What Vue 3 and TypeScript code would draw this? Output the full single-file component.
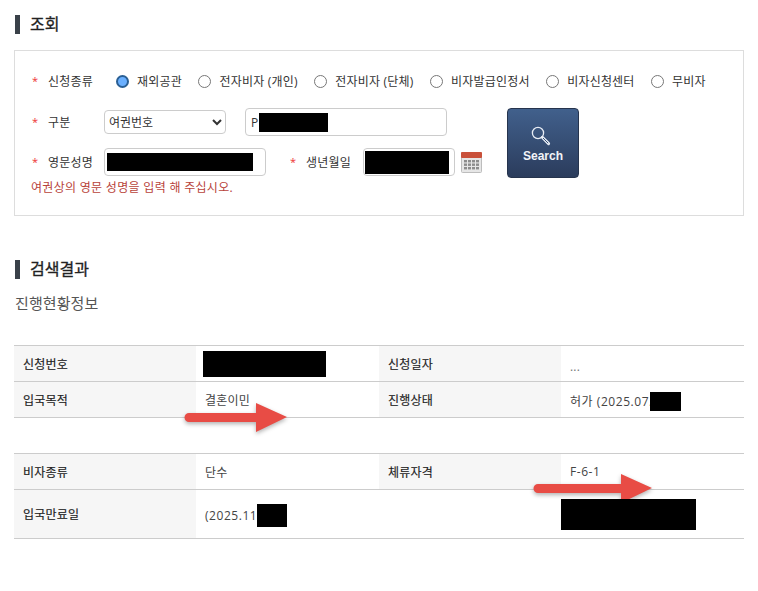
<script setup lang="ts">
const radios: string[] = ['재외공관', '전자비자 (개인)', '전자비자 (단체)', '비자발급인정서', '비자신청센터', '무비자']
</script>

<template>
  <div class="page">
    <h2 class="heading">조회</h2>
    <section class="box">
      <div class="row radio-row">
        <span class="star">*</span>
        <span class="label">신청종류</span>
        <div class="radios">
          <label v-for="(r, i) in radios" :key="r" class="radio">
            <input type="radio" name="kind" :checked="i === 0" />
            <span>{{ r }}</span>
          </label>
        </div>
      </div>
      <div class="form-body">
        <div class="fields">
          <div class="row">
            <span class="star">*</span>
            <span class="label">구분</span>
            <select class="select"><option>여권번호</option></select>
            <div class="input passport"><span>P</span><i class="mask m-pass"></i></div>
          </div>
          <div class="row">
            <span class="star">*</span>
            <span class="label">영문성명</span>
            <div class="input name"><i class="mask m-name"></i></div>
            <span class="star star2">*</span>
            <span class="label label2">생년월일</span>
            <div class="input birth"><i class="mask m-birth"></i></div>
            <svg class="cal" width="21" height="21" viewBox="0 0 21 21">
              <rect x="0.5" y="0.5" width="20" height="20" rx="1" fill="#e6e6e6" stroke="#bdbdbd" />
              <rect x="0" y="0" width="21" height="6" rx="1" fill="#c9503a" />
              <g fill="#8c8c8c">
                <rect x="3" y="8" width="3" height="2.4" /><rect x="7" y="8" width="3" height="2.4" /><rect x="11" y="8" width="3" height="2.4" /><rect x="15" y="8" width="3" height="2.4" />
                <rect x="3" y="11.5" width="3" height="2.4" /><rect x="7" y="11.5" width="3" height="2.4" /><rect x="11" y="11.5" width="3" height="2.4" /><rect x="15" y="11.5" width="3" height="2.4" />
                <rect x="3" y="15" width="3" height="2.4" /><rect x="7" y="15" width="3" height="2.4" /><rect x="11" y="15" width="3" height="2.4" /><rect x="15" y="15" width="3" height="2.4" />
              </g>
            </svg>
          </div>
          <p class="error">여권상의 영문 성명을 입력 해 주십시오.</p>
        </div>
        <button class="search" type="button">
          <svg class="lens" width="20" height="20" viewBox="0 0 20 20" fill="none" stroke="#e8edf5">
            <circle cx="7" cy="7" r="5.6" stroke-width="1.3" />
            <path d="M11.3 11.3 L17.6 17.6" stroke-width="3" stroke-linecap="round" />
            <path d="M12 12 L17.2 17.2" stroke="#3a5278" stroke-width="1" />
          </svg>
          <span>Search</span>
        </button>
      </div>
    </section>

    <h2 class="heading second">검색결과</h2>
    <h3 class="sub">진행현황정보</h3>

    <div class="results">
      <table class="tbl first">
        <tbody>
          <tr>
            <th>신청번호</th>
            <td class="c1"><i class="mask m-no"></i></td>
            <th>신청일자</th>
            <td class="dots">...</td>
          </tr>
          <tr>
            <th>입국목적</th>
            <td class="c1">결혼이민</td>
            <th>진행상태</th>
            <td class="low lat">허가 (2025.07.<i class="mask m-date"></i></td>
          </tr>
        </tbody>
      </table>
      <table class="tbl">
        <tbody>
          <tr>
            <th>비자종류</th>
            <td class="c1">단수</td>
            <th>체류자격</th>
            <td class="lat">F-6-1</td>
          </tr>
          <tr class="tall">
            <th>입국만료일</th>
            <td class="c1 low lat">(2025.11<i class="mask m-exp"></i></td>
            <th class="blank"></th>
            <td class="flush"><i class="mask m-big"></i></td>
          </tr>
        </tbody>
      </table>
      <svg class="arrow a1" width="104" height="31" viewBox="0 0 104 31">
        <path d="M5 11 H72 V1 L103 15 L72 30 V20 H5 A4.5 4.5 0 0 1 5 11 Z" fill="#e84c45" />
      </svg>
      <svg class="arrow a2" width="120" height="31" viewBox="0 0 120 31">
        <path d="M5 11 H88 V1 L119 15 L88 30 V20 H5 A4.5 4.5 0 0 1 5 11 Z" fill="#e84c45" />
      </svg>
    </div>
  </div>
</template>

<style scoped>
.page {
  width: 730px;
  padding: 15px 14px 0;
  font-family: "Open Sans", "Noto Sans CJK KR", sans-serif;
  font-size: 12px;
  color: #333;
}
.heading {
  margin: 0 0 16px 1px;
  height: 19px;
  padding-left: 10px;
  border-left: 5px solid #3a4149;
  font-size: 16px;
  font-weight: 400;
  -webkit-text-stroke: 0.3px #222;
  line-height: 18px;
  color: #222;
}
.heading.second { margin-top: 44px; margin-bottom: 0; }
.sub {
  margin: 14px 0 0 1px;
  font-size: 15px;
  font-weight: 400;
  line-height: 20px;
  color: #555;
  letter-spacing: 0.1px;
}
.box {
  box-sizing: border-box;
  height: 166px;
  border: 1px solid #ddd;
  padding: 20px 0 0 17px;
}
.row { display: flex; align-items: center; }
.radio-row { height: 20px; margin-bottom: 17px; }
.star { width: 16px; color: #e33; font-size: 11px; line-height: 12px; }
.label { width: 56px; letter-spacing: 0.2px; }
.radios { display: flex; gap: 16.5px; margin-left: 12px; }
.radio { display: flex; align-items: center; gap: 8px; letter-spacing: 0.2px; white-space: nowrap; }
.radio input {
  appearance: none;
  box-sizing: border-box;
  width: 13px;
  height: 13px;
  margin: 0;
  border: 1px solid #777;
  border-radius: 50%;
  background: #fff;
}
.radio input:checked {
  border: 2px solid #2a5f94;
  background: #6bb0ff;
}
.form-body { display: flex; align-items: flex-start; }
.fields { width: 475px; display: flex; flex-direction: column; gap: 12px; }
.select {
  box-sizing: border-box;
  width: 122px;
  height: 24px;
  border: 1px solid #ccc;
  border-radius: 4px;
  background: #fff;
  padding: 0;
  font: inherit;
  color: #333;
}
.input {
  box-sizing: border-box;
  position: relative;
  display: flex;
  align-items: center;
  height: 28px;
  border: 1px solid #ccc;
  border-radius: 4px;
  background: #fff;
}
.passport { width: 202px; margin-left: 19px; padding-left: 5px; }
.name { width: 162px; padding-left: 2px; }
.birth { width: 92px; padding-left: 1px; margin-left: 1px; }
.star2 { margin-left: 24px; }
.label2 { width: 56px; }
.cal { margin-left: 6px; }
.mask { display: inline-block; background: #000; }
.m-pass { width: 69px; height: 19px; margin-left: 1px; }
.m-name { width: 146px; height: 18px; }
.m-birth { width: 84px; height: 23px; }
.m-no { width: 123px; height: 26px; margin-left: -2px; vertical-align: middle; }
.m-date { width: 31px; height: 19px; margin-left: -3px; vertical-align: -5px; }
.m-exp { width: 30px; height: 23px; vertical-align: -7px; }
.m-big { display: block; width: 135px; height: 31px; position: relative; z-index: 2; }
.error { margin: -8px 0 0 -1px; color: #b8433a; line-height: 16px; letter-spacing: 0.3px; }
.search {
  box-sizing: border-box;
  width: 72px;
  height: 70px;
  display: flex;
  flex-direction: column;
  align-items: center;
  justify-content: flex-start;
  gap: 3px;
  padding: 17px 0 0;
  border: 1px solid #26344d;
  border-radius: 4px;
  background: linear-gradient(#41608c, #2b3c5c);
  color: #f2f4f8;
  font-family: "Liberation Sans", sans-serif;
  font-size: 12px;
  line-height: 14px;
  font-weight: 700;
}
.lens { margin-right: 4px; }
.results { position: relative; margin-top: 32px; }
.tbl {
  width: 730px;
  table-layout: fixed;
  border-collapse: collapse;
  border-top: 1px solid #ccc;
}
.tbl.first { margin-bottom: 35px; }
.tbl tr { height: 36px; border-bottom: 1px solid #ccc; }
.tbl tr.tall { height: 49px; }
.tbl th {
  width: 182px;
  box-sizing: border-box;
  padding: 0 0 0 9px;
  background: #f6f6f6;
  text-align: left;
  font-weight: 400;
  -webkit-text-stroke: 0.15px #222;
  letter-spacing: 0.2px;
  color: #222;
}
.tbl th.blank { background: #fff; }
.tbl td { padding: 0 0 0 9px; letter-spacing: 0.2px; white-space: nowrap; color: #444; }
.tbl td.lat { letter-spacing: 0.55px; }
.tbl td.low { padding-top: 3px; }
.tbl td.flush { padding: 0; }
.tbl td.dots { color: #777; padding-top: 6px; }
.arrow {
  position: absolute;
  z-index: 1;
  filter: drop-shadow(0 2px 2px rgba(0, 0, 0, 0.3));
}
.a1 { left: 170px; top: 57px; }
.a2 { left: 519px; top: 128px; }
</style>
